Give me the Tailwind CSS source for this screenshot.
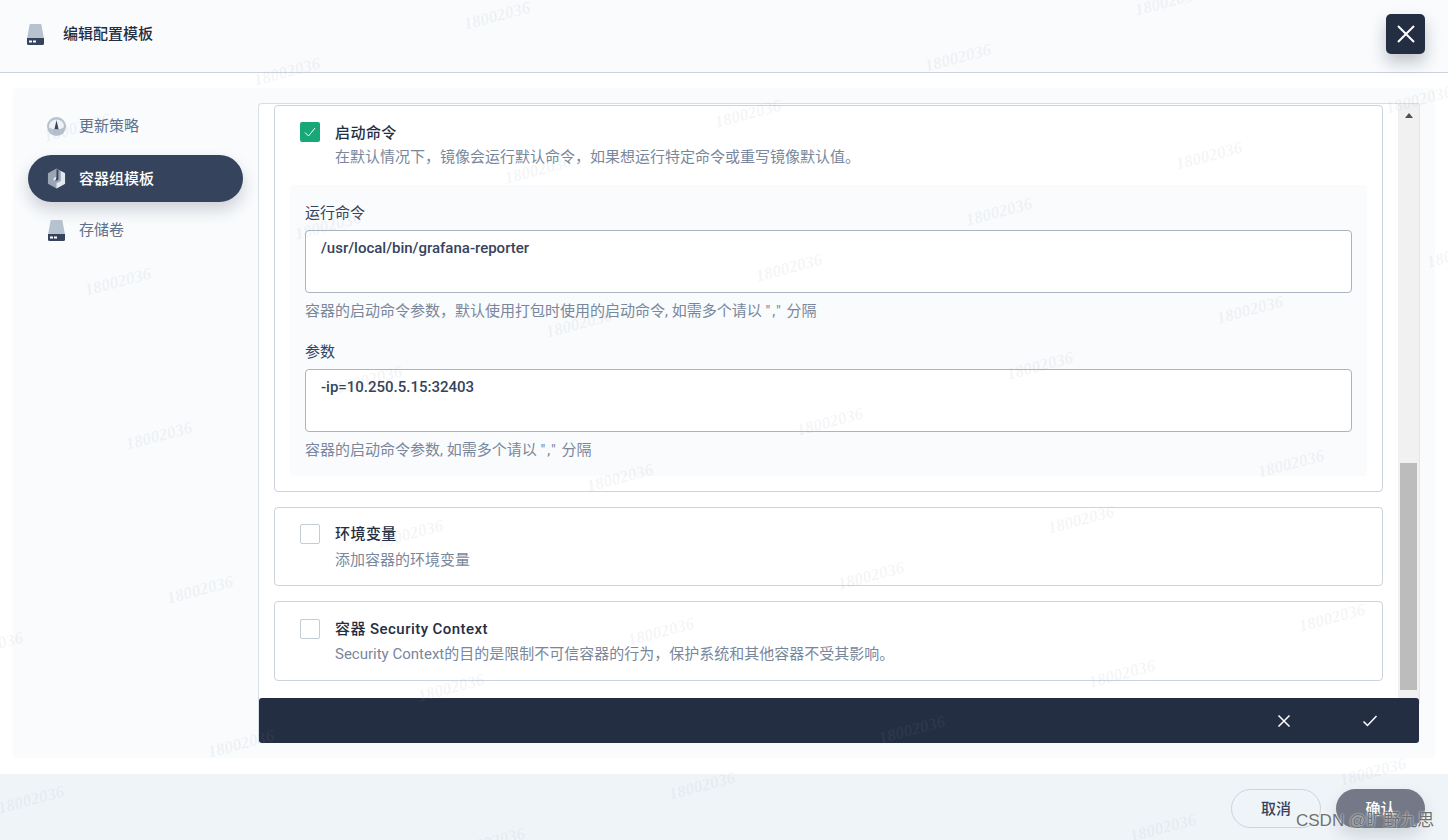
<!DOCTYPE html>
<html lang="en">
<head>
    <meta charset="UTF-8">
    <meta name="viewport" content="width=device-width, initial-scale=1.0">
    <title>编辑配置模板</title>
    <script src="https://cdn.jsdelivr.net/npm/@tailwindcss/browser@4"></script>
</head>

<body class="relative w-[1448px] h-[840px] overflow-hidden bg-white font-['Roboto','Noto_Sans_CJK_SC',sans-serif] text-[15px] text-[#242e42]">

    <!-- Header -->
    <header class="h-[73px] flex items-center bg-[#f9fbfd] border-b border-[#ccd3db] relative">
        <svg class="ml-[27px] w-[17px] h-[21px] mt-[-3px]" viewBox="0 0 17 21">
            <path d="M3.500 0h10a1 1 0 0 1 1 1L17 15H0L2.500 1a1 1 0 0 1 1-1z" fill="#b6c2cf"/>
            <path d="M0 14h17v5.500a1.500 1.500 0 0 1-1.500 1.500h-14A1.500 1.500 0 0 1 0 19.500z" fill="#36435c"/>
            <rect x="2" y="16.500" width="3" height="2" fill="#fff"/><rect x="6" y="16.500" width="3" height="2" fill="#fff"/>
        </svg>
        <h1 class="ml-[19px] mt-[-5px] text-[15px] font-medium leading-5 text-[#242e42]">编辑配置模板</h1>
        <button class="absolute left-[1386px] top-[14px] w-[39px] h-[40px] rounded-[5px] bg-[#242e42] shadow-[0_8px_16px_0_rgba(36,46,66,0.28)] flex items-center justify-center">
            <svg class="w-[20px] h-[20px]" viewBox="0 0 20 20" fill="none" stroke="#fff" stroke-width="2"><path d="M2 2l16 16M18 2L2 18"/></svg>
        </button>
    </header>

    <!-- Body -->
    <main class="h-[701px] pt-[15px] px-[13px] pb-[16px]">
        <div class="h-[670px] bg-[#f9fbfd] rounded-[4px] flex">
            <!-- Sidebar -->
            <nav class="w-[245px] shrink-0 pt-[15px] pl-[15px] pr-[15px]">
                <a class="h-[47px] flex items-center pl-[19px] text-[#5f708a]">
                    <svg class="w-[19px] h-[19px]" viewBox="0 0 20 20">
                        <circle cx="10" cy="10" r="10" fill="#b6c2cf"/>
                        <path d="M2 10.500a8 8 0 1 1 16 0c-1.500 1.500-4 2.500-8 2.500s-6.500-1-8-2.500z" fill="#eef2f6"/>
                        <path d="M10 3.500l2.200 9.500H7.800z" fill="#36435c"/>
                    </svg>
                    <span class="ml-[13px]">更新策略</span>
                </a>
                <a class="mt-[5px] h-[47px] flex items-center pl-[19px] rounded-full bg-[#36435c] text-white shadow-[0_8px_16px_0_rgba(36,46,66,0.2)]">
                    <svg class="w-[19px] h-[21px]" viewBox="0 0 20 22">
                        <path d="M10 0.500l9 5v11l-9 5-9-5v-11z" fill="#9aa5b5"/>
                        <path d="M14.500 3v10.500L10 16v5.500l9-5V5.500z" fill="#e4e8ee"/>
                        <path d="M12 2v10l-3 1.700v-2.200l1-.6V1z" fill="#36435c"/>
                        <path d="M7 10.500l2.500-1.400v3L7 13.500z" fill="#e4e8ee"/>
                    </svg>
                    <span class="ml-[13px] mt-[1px] font-medium">容器组模板</span>
                </a>
                <a class="mt-[5px] h-[47px] flex items-center pl-[20px] text-[#5f708a]">
                    <svg class="w-[17px] h-[21px]" viewBox="0 0 17 21">
                        <path d="M3.500 0h10a1 1 0 0 1 1 1L17 15H0L2.500 1a1 1 0 0 1 1-1z" fill="#b6c2cf"/>
                        <path d="M0 14h17v5.500a1.500 1.500 0 0 1-1.500 1.500h-14A1.500 1.500 0 0 1 0 19.500z" fill="#36435c"/>
                        <rect x="2" y="16.500" width="3" height="2" fill="#fff"/><rect x="6" y="16.500" width="3" height="2" fill="#fff"/>
                    </svg>
                    <span class="ml-[14px]">存储卷</span>
                </a>
            </nav>

            <!-- Form panel -->
            <section class="relative w-[1161px] h-[640px] mt-[15px] bg-white border-l border-t border-[#d8dee5] rounded-tl-[4px]">
                <div class="w-[1124px] pl-[15px] pt-[1px]">
                    <!-- 启动命令 -->
                    <div class="h-[387px] w-[1109px] border border-[#ccd3db] rounded-[4px] bg-white pt-[16px] px-[15px]">
                        <div class="flex pl-[10px]">
                            <span class="w-[20px] h-[20px] mt-0 rounded-[2px] bg-[#18a877] flex items-center justify-center">
                                <svg class="w-[14px] h-[14px]" viewBox="0 0 14 14" fill="none" stroke="#fff" stroke-width="1"><path d="M2 7.500l3.500 3.500L12 3"/></svg>
                            </span>
                            <div class="ml-[15px]">
                                <div class="mt-[1px] leading-5 font-medium tracking-[0.45px] text-[#242e42]">启动命令</div>
                                <div class="mt-[4px] leading-5 text-[#79879c]">在默认情况下，镜像会运行默认命令，如果想运行特定命令或重写镜像默认值。</div>
                            </div>
                        </div>
                        <div class="mt-[18px] h-[291px] w-[1077px] rounded-[4px] bg-[#f9fbfd] pt-[18px] px-[15px]">
                            <label class="block leading-5 text-[#36435c]">运行命令</label>
                            <div class="mt-[7px] h-[63px] w-[1047px] rounded-[4px] border border-[#abb4c3] bg-white px-[15px] py-[7px] font-medium leading-5 text-[#36435c]">/usr/local/bin/grafana-reporter</div>
                            <p class="mt-[8px] leading-5 text-[#79879c]">容器的启动命令参数，默认使用打包时使用的启动命令, 如需多个请以 <span class="tracking-[2px]">","</span> 分隔</p>
                            <label class="block mt-[21px] leading-5 text-[#36435c]">参数</label>
                            <div class="mt-[7px] h-[63px] w-[1047px] rounded-[4px] border border-[#abb4c3] bg-white px-[15px] py-[7px] font-medium leading-5 text-[#36435c]">-ip=10.250.5.15:32403</div>
                            <p class="mt-[8px] leading-5 text-[#79879c]">容器的启动命令参数, 如需多个请以 <span class="tracking-[2px]">","</span> 分隔</p>
                        </div>
                    </div>

                    <!-- 环境变量 -->
                    <div class="mt-[15px] h-[79px] w-[1109px] border border-[#ccd3db] rounded-[4px] bg-white pt-[16px] pl-[25px] flex">
                        <span class="w-[20px] h-[20px] rounded-[2px] border border-[#c5ccd6] bg-white"></span>
                        <div class="ml-[15px]">
                            <div class="leading-5 font-medium tracking-[0.45px] text-[#242e42]">环境变量</div>
                            <div class="mt-[6px] leading-5 text-[#79879c]">添加容器的环境变量</div>
                        </div>
                    </div>

                    <!-- Security Context -->
                    <div class="mt-[15px] h-[80px] w-[1109px] border border-[#ccd3db] rounded-[4px] bg-white pt-[17px] pl-[25px] flex">
                        <span class="w-[20px] h-[20px] rounded-[2px] border border-[#c5ccd6] bg-white"></span>
                        <div class="ml-[15px]">
                            <div class="leading-5 font-medium tracking-[0.45px] text-[#242e42]">容器 Security Context</div>
                            <div class="mt-[5px] leading-5 text-[#79879c]">Security Context的目的是限制不可信容器的行为，保护系统和其他容器不受其影响。</div>
                        </div>
                    </div>
                </div>

                <!-- Scrollbar -->
                <div class="absolute left-[1139px] top-0 h-[600px] w-[22px] bg-[#f1f1f1] border-r border-[#e3e6ea]">
                    <div class="mx-auto mt-[9px] w-0 h-0 border-x-[4px] border-x-transparent border-b-[5px] border-b-[#505050]"></div>
                    <div class="absolute left-[2px] top-[359px] w-[17px] h-[227px] bg-[#bcbcbc]"></div>
                </div>

                <!-- Edit action bar -->
                <div class="absolute left-0 top-[594px] w-[1160px] h-[45px] bg-[#242e42] rounded-[3px] flex items-center justify-end">
                    <svg class="w-[14px] h-[14px] mr-[71px]" viewBox="0 0 14 14" fill="none" stroke="#fff" stroke-width="1.500"><path d="M1.500 1.500l11 11M12.500 1.500l-11 11"/></svg>
                    <svg class="w-[16px] h-[14px] mr-[41px]" viewBox="0 0 16 14" fill="none" stroke="#fff" stroke-width="1.500"><path d="M1.500 7.500l4 4L14.500 2"/></svg>
                </div>
            </section>
        </div>
    </main>

    <!-- Footer -->
    <footer class="h-[66px] bg-[#eff4f8] flex items-start justify-end pt-[15px] pr-[23px] gap-[15px]">
        <button class="w-[90px] h-[39px] pt-[2px] rounded-full border border-[#ccd3db] font-medium text-[#36435c]">取消</button>
        <button class="w-[89px] h-[39px] pt-[2px] rounded-full bg-[#737987] font-medium text-white shadow-[0_8px_16px_0_rgba(36,46,66,0.15)]">确认</button>
    </footer>

    <!-- Page watermarks -->
    <div id="marks" class="absolute inset-0 pointer-events-none"></div>

    <div class="absolute left-[1296px] top-[809px] text-[17px] leading-[24px] text-[#707070] font-['Liberation_Sans','Noto_Sans_CJK_SC',sans-serif] [text-shadow:0_0_2px_#fff]">CSDN @旷野九思</div>

    <script>
        const marks = document.getElementById('marks');
        for (let i = -4; i < 9; i++) {
            for (let j = -2; j < 7; j++) {
                const x = 287 + i * 210 + j * 41;
                const y = 72 - i * 56 + j * 154;
                if (x < -60 || x > 1500 || y < -20 || y > 860) continue;
                const el = document.createElement('span');
                el.className = 'absolute -translate-x-1/2 -translate-y-1/2 -rotate-[15deg] italic font-bold text-[17px] text-[#8a97a6]/10 font-["Liberation_Serif",serif]';
                el.style.left = x + 'px';
                el.style.top = y + 'px';
                el.textContent = '18002036';
                marks.appendChild(el);
            }
        }
    </script>
</body>
</html>
